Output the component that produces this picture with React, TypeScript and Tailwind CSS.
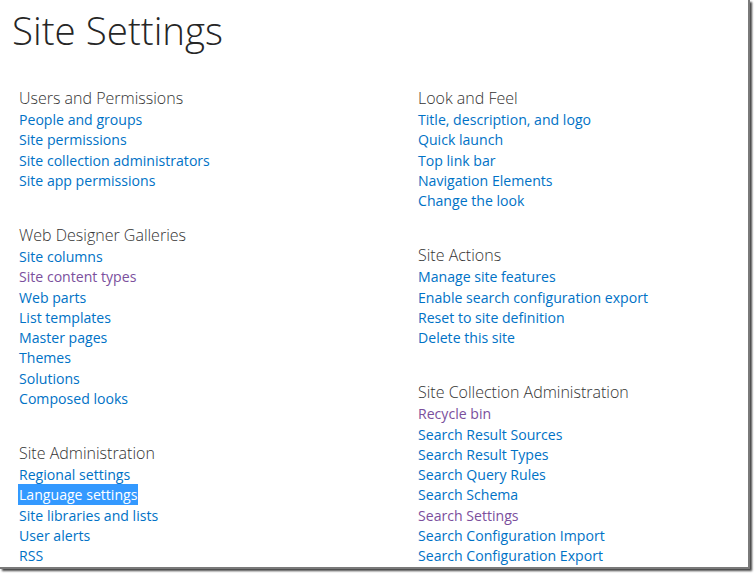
import React from "react";

type Link = { t: string; v?: boolean; sel?: boolean };
type Section = { title: string; links: Link[] };

const left: Section[] = [
  {
    title: "Users and Permissions",
    links: [
      { t: "People and groups" },
      { t: "Site permissions" },
      { t: "Site collection administrators" },
      { t: "Site app permissions" },
    ],
  },
  {
    title: "Web Designer Galleries",
    links: [
      { t: "Site columns" },
      { t: "Site content types", v: true },
      { t: "Web parts" },
      { t: "List templates" },
      { t: "Master pages" },
      { t: "Themes" },
      { t: "Solutions" },
      { t: "Composed looks" },
    ],
  },
  {
    title: "Site Administration",
    links: [
      { t: "Regional settings" },
      { t: "Language settings", sel: true },
      { t: "Site libraries and lists" },
      { t: "User alerts" },
      { t: "RSS" },
    ],
  },
];

const right: Section[] = [
  {
    title: "Look and Feel",
    links: [
      { t: "Title, description, and logo" },
      { t: "Quick launch" },
      { t: "Top link bar" },
      { t: "Navigation Elements" },
      { t: "Change the look" },
    ],
  },
  {
    title: "Site Actions",
    links: [
      { t: "Manage site features" },
      { t: "Enable search configuration export" },
      { t: "Reset to site definition" },
      { t: "Delete this site" },
    ],
  },
  {
    title: "Site Collection Administration",
    links: [
      { t: "Recycle bin", v: true },
      { t: "Search Result Sources" },
      { t: "Search Result Types" },
      { t: "Search Query Rules" },
      { t: "Search Schema" },
      { t: "Search Settings", v: true },
      { t: "Search Configuration Import" },
      { t: "Search Configuration Export" },
    ],
  },
];

function Col({ sections }: { sections: Section[] }) {
  return (
    <div className="flex flex-col gap-[33px]">
      {sections.map((s) => (
        <div key={s.title} className="flex flex-col">
          <div className="text-[16px] leading-[23px] font-light text-[#333333]">{s.title}</div>
          {s.links.map((l) => (
            <div key={l.t} className="text-[14.1px] leading-[20.25px]">
              <span
                className={
                  l.sel
                    ? "bg-[#3399ff] text-white px-[1px] -mx-[1px] py-[1px]"
                    : l.v
                    ? "text-[#7b4f9d]"
                    : "text-[#0072c6]"
                }
              >
                {l.t}
              </span>
            </div>
          ))}
        </div>
      ))}
    </div>
  );
}

export default function App() {
  return (
    <div className="w-[755px] h-[574px] bg-white overflow-hidden" style={{ fontFamily: '"Open Sans", "Noto Sans", sans-serif' }}>
      <div className="w-[750px] h-[569px] border-r-[2px] border-b-[2px] border-[#7a7a7a] shadow-[2px_2px_2px_#444] bg-white">
        <div className="pl-[12px] pt-[4px] text-[38.5px] leading-[52px] font-light text-[#262626]">Site Settings</div>
        <div className="flex pl-[19px] pt-[31px]">
          <div className="w-[399px]">
            <Col sections={left} />
          </div>
          <div>
            <Col sections={right} />
          </div>
        </div>
      </div>
    </div>
  );
}
